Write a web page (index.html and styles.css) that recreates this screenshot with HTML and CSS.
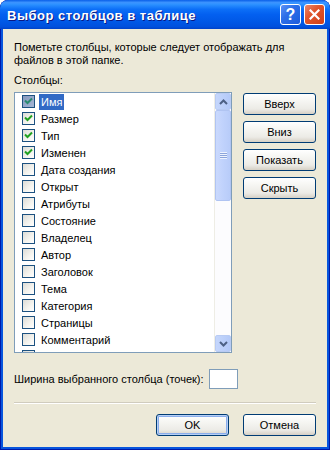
FILE: index.html
```html
<!DOCTYPE html>
<html lang="ru">
<head>
<meta charset="utf-8">
<title>Выбор столбцов в таблице</title>
<link rel="stylesheet" href="styles.css">
</head>
<body>
<div class="window">
  <div class="titlebar">
    <span class="title">Выбор столбцов в таблице</span>
    <div class="tbtns">
      <span class="tbtn help">?</span>
      <span class="tbtn close"><svg width="11" height="11" viewBox="0 0 11 11"><path d="M1.5 1.5 L9.5 9.5 M9.5 1.5 L1.5 9.5" stroke="#fff" stroke-width="2.2" stroke-linecap="square"/></svg></span>
    </div>
  </div>
  <div class="client">
    <p class="desc">Пометьте столбцы, которые следует отображать для<br>файлов в этой папке.</p>
    <div class="label">Столбцы:</div>
    <div class="mid">
      <div class="listbox">
        <ul class="items">
          <li class="row selected"><span class="cb checked"><svg width="11" height="11" viewBox="0 0 11 11"><path d="M2 4.5 L4.5 7 L9 2.5" fill="none" stroke-width="2"/></svg></span><span class="txt">Имя</span></li>
          <li class="row"><span class="cb checked"><svg width="11" height="11" viewBox="0 0 11 11"><path d="M2 4.5 L4.5 7 L9 2.5" fill="none" stroke-width="2"/></svg></span><span class="txt">Размер</span></li>
          <li class="row"><span class="cb checked"><svg width="11" height="11" viewBox="0 0 11 11"><path d="M2 4.5 L4.5 7 L9 2.5" fill="none" stroke-width="2"/></svg></span><span class="txt">Тип</span></li>
          <li class="row"><span class="cb checked"><svg width="11" height="11" viewBox="0 0 11 11"><path d="M2 4.5 L4.5 7 L9 2.5" fill="none" stroke-width="2"/></svg></span><span class="txt">Изменен</span></li>
          <li class="row"><span class="cb"></span><span class="txt">Дата создания</span></li>
          <li class="row"><span class="cb"></span><span class="txt">Открыт</span></li>
          <li class="row"><span class="cb"></span><span class="txt">Атрибуты</span></li>
          <li class="row"><span class="cb"></span><span class="txt">Состояние</span></li>
          <li class="row"><span class="cb"></span><span class="txt">Владелец</span></li>
          <li class="row"><span class="cb"></span><span class="txt">Автор</span></li>
          <li class="row"><span class="cb"></span><span class="txt">Заголовок</span></li>
          <li class="row"><span class="cb"></span><span class="txt">Тема</span></li>
          <li class="row"><span class="cb"></span><span class="txt">Категория</span></li>
          <li class="row"><span class="cb"></span><span class="txt">Страницы</span></li>
          <li class="row"><span class="cb"></span><span class="txt">Комментарий</span></li>
          <li class="row partial"><span class="cb"></span></li>
        </ul>
        <div class="scrollbar">
          <div class="sb-btn"><svg width="9" height="6" viewBox="0 0 9 6"><path d="M1 5 L4.5 1.5 L8 5" fill="none" stroke="#4D6185" stroke-width="2"/></svg></div>
          <div class="sb-track">
            <div class="thumb"><span class="grip"></span></div>
          </div>
          <div class="sb-btn"><svg width="9" height="6" viewBox="0 0 9 6"><path d="M1 1 L4.5 4.5 L8 1" fill="none" stroke="#4D6185" stroke-width="2"/></svg></div>
        </div>
      </div>
      <div class="side-btns">
        <button class="btn">Вверх</button>
        <button class="btn">Вниз</button>
        <button class="btn">Показать</button>
        <button class="btn">Скрыть</button>
      </div>
    </div>
    <div class="width-row">
      <span class="wlabel">Ширина выбранного столбца (точек):</span>
      <span class="num"></span>
    </div>
    <div class="sep"></div>
    <div class="footer">
      <button class="btn default">OK</button>
      <button class="btn">Отмена</button>
    </div>
  </div>
</div>
</body>
</html>
```

FILE: styles.css
```css
* { box-sizing: border-box; }
html, body { margin: 0; padding: 0; background: #fff; }
body {
  font-family: "Liberation Sans", Arial, sans-serif;
  font-size: 11px;
  color: #000;
}
.window {
  width: 330px;
  height: 450px;
  background: #0855DD;
  border-radius: 8px 8px 0 0;
  box-shadow: inset 1px 0 0 #0019A8, inset -1px 0 0 #0019A8, inset 0 -1px 0 #0019A8;
  display: flex;
  flex-direction: column;
  overflow: hidden;
}
.titlebar {
  height: 29px;
  flex: none;
  display: flex;
  align-items: center;
  justify-content: space-between;
  padding: 0 5px 0 7px;
  background: linear-gradient(to bottom, #0A5FE8 0%, #3D95FF 9%, #2B90FF 16%, #0C6FF7 32%, #0360F0 50%, #0058E6 75%, #0050DD 92%, #0042C8 100%);
  border-radius: 8px 8px 0 0;
}
.title {
  color: #fff;
  font-family: "Liberation Sans", Arial, sans-serif;
  font-weight: bold;
  font-size: 13px;
  letter-spacing: 0.5px;
  text-shadow: 1px 1px 0 #0A1883;
  padding-top: 1px;
}
.tbtns { display: flex; gap: 3px; }
.tbtn {
  width: 21px;
  height: 21px;
  border: 1px solid #fff;
  border-radius: 3px;
  display: flex;
  align-items: center;
  justify-content: center;
  color: #fff;
  font-weight: bold;
  font-size: 16px;
}
.help {
  background: linear-gradient(135deg, #5D92F6 0%, #2D6FE8 40%, #1C5BDC 100%);
  font-family: "Liberation Sans", Arial, sans-serif;
}
.close {
  background: linear-gradient(135deg, #E9876C 0%, #E0562D 40%, #CF3F18 100%);
}
.client {
  flex: 1;
  margin: 0 3px 3px;
  background: #ECE9D8;
  padding: 12px 11px 0 11px;
  display: flex;
  flex-direction: column;
}
.desc {
  margin: 0;
  line-height: 13px;
}
.label {
  margin-top: 7px;
  line-height: 13px;
}
.mid {
  display: flex;
  margin-top: 5px;
  gap: 11px;
}
.listbox {
  width: 218px;
  height: 261px;
  border: 1px solid #7F9DB9;
  background: #fff;
  display: flex;
  overflow: hidden;
}
.items {
  list-style: none;
  margin: 0;
  padding: 0;
  flex: 1;
  overflow: hidden;
}
.row {
  height: 17px;
  display: flex;
  align-items: center;
  padding-left: 7px;
}
.row.partial { align-items: flex-start; padding-top: 2px; }
.cb {
  width: 13px;
  height: 13px;
  border: 1px solid #1C5180;
  background: linear-gradient(135deg, #DCDCD7 0%, #F5F4EF 60%, #FFFFFF 100%);
  display: flex;
  align-items: center;
  justify-content: center;
  flex: none;
}
.cb svg path { stroke: #21A121; }
.selected .cb { background: linear-gradient(135deg, #8799BD 0%, #A4B6D6 100%); }
.selected .cb svg path { stroke: #2A8B70; }
.txt {
  margin-left: 4px;
  padding: 0 2px;
  line-height: 16px;
}
.selected .txt {
  background: #316AC5;
  color: #fff;
}
.scrollbar {
  width: 17px;
  flex: none;
  display: flex;
  flex-direction: column;
  background: #FCFCFE;
  border-left: 1px solid #EEEDE5;
}
.sb-btn {
  width: 16px;
  height: 17px;
  border: 1px solid #B8CBF3;
  border-radius: 2px;
  background: linear-gradient(to right, #C5D6FC 0%, #BCD0FA 50%, #B3C9F8 100%);
  display: flex;
  align-items: center;
  justify-content: center;
  flex: none;
}
.sb-track {
  flex: 1;
}
.thumb {
  width: 16px;
  height: 91px;
  border: 1px solid #B0C4F2;
  border-radius: 2px;
  background: linear-gradient(to right, #CAD9FD 0%, #C0D2FC 50%, #B8CCF9 100%);
  display: flex;
  align-items: center;
  justify-content: center;
}
.grip {
  width: 7px;
  height: 7px;
  background: repeating-linear-gradient(to bottom, #EEF3FE 0 1px, #8CA5DB 1px 2px);
}
.side-btns {
  display: flex;
  flex-direction: column;
  gap: 6px;
  padding-top: 1px;
}
.btn {
  width: 73px;
  height: 22px;
  border: 1px solid #003C74;
  border-radius: 3px;
  background: linear-gradient(to bottom, #FFFFFF 0%, #F7F7F4 30%, #ECEBE6 75%, #D6D0C5 100%);
  font-family: "Liberation Sans", Arial, sans-serif;
  font-size: 11px;
  color: #000;
  padding: 0;
  line-height: 18px;
}
.default {
  box-shadow: inset 0 0 0 1px #B6CFF5, inset 0 0 0 2px #8AADEB;
}
.width-row {
  display: flex;
  align-items: center;
  margin-top: 16px;
  gap: 5px;
}
.num {
  width: 29px;
  height: 20px;
  border: 1px solid #7F9DB9;
  background: #fff;
}
.sep {
  margin-top: 13px;
  height: 2px;
  border-top: 1px solid #D0CCBE;
  border-bottom: 1px solid #fff;
}
.footer {
  display: flex;
  justify-content: flex-end;
  gap: 14px;
  margin-top: 10px;
}
```
